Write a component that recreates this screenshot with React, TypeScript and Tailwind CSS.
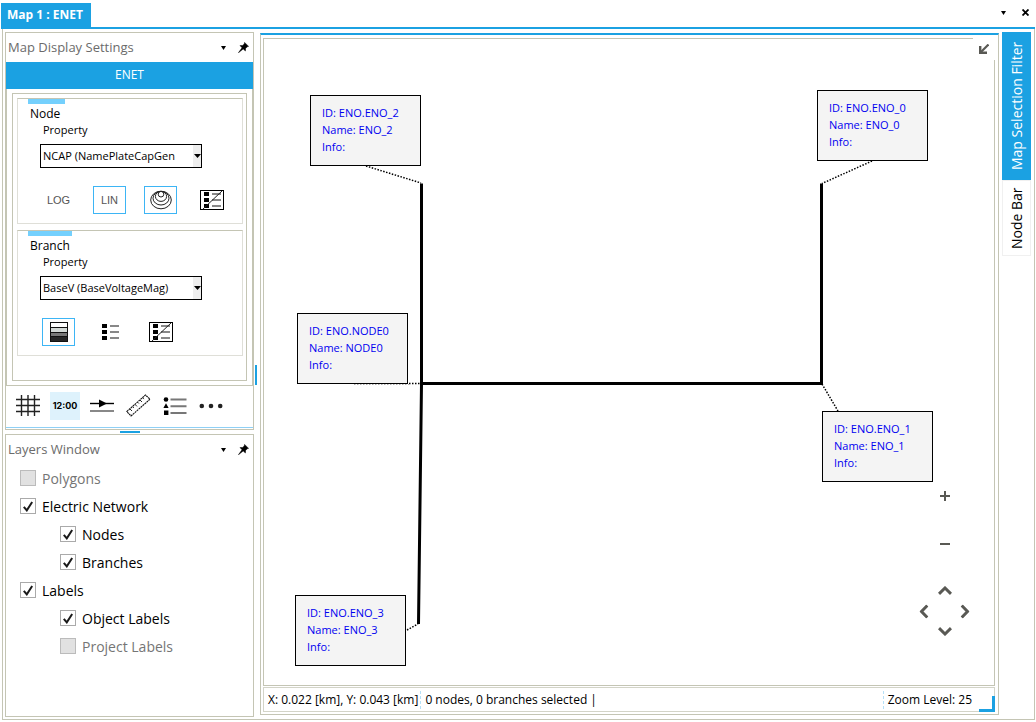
import React from "react";
import { clsx } from "clsx";

const nodeLabels = [
  { id: "ENO.ENO_2", name: "ENO_2", place: "left-[46px] top-[56px]" },
  { id: "ENO.ENO_0", name: "ENO_0", place: "left-[553px] top-[51px]" },
  { id: "ENO.NODE0", name: "NODE0", place: "left-[33px] top-[274px]" },
  { id: "ENO.ENO_1", name: "ENO_1", place: "left-[558px] top-[372px]" },
  { id: "ENO.ENO_3", name: "ENO_3", place: "left-[31px] top-[556px]" },
];

const layers = [
  { label: "Polygons", checked: false, disabled: true, child: false },
  { label: "Electric Network", checked: true, disabled: false, child: false },
  { label: "Nodes", checked: true, disabled: false, child: true },
  { label: "Branches", checked: true, disabled: false, child: true },
  { label: "Labels", checked: true, disabled: false, child: false },
  { label: "Object Labels", checked: true, disabled: false, child: true },
  { label: "Project Labels", checked: false, disabled: true, child: true },
];

/* ---------- icons ---------- */

function CaretIcon() {
  return (
    <svg width="5" height="4" viewBox="0 0 5 4">
      <path d="M0 0h5L2.5 4z" fill="#000" />
    </svg>
  );
}

function PinIcon() {
  return (
    <svg width="11" height="11" viewBox="0 0 11 11">
      <path d="M6.6 0.4L10.6 4.4L9.2 4.8L7.6 6.4L7.4 9L5.2 7L0.4 10.8L4 5.8L2 3.6L4.8 3.4L6.3 1.8z" fill="#000" stroke="#000" strokeWidth="0.5" />
    </svg>
  );
}

function BubblesIcon() {
  return (
    <svg width="22" height="20" viewBox="0 0 22 20" fill="none" stroke="#222" strokeWidth="1">
      <ellipse cx="11" cy="10" rx="10.3" ry="8.8" />
      <ellipse cx="11" cy="8.2" rx="8" ry="6.8" />
      <ellipse cx="11" cy="6.4" rx="5.6" ry="5" />
      <circle cx="11" cy="4.2" r="2.8" />
    </svg>
  );
}

function ListIcon({ boxed = false }: { boxed?: boolean }) {
  return (
    <svg width="24" height="20" viewBox="0 0 24 20">
      {boxed && <rect x="0.5" y="0.5" width="23" height="19" fill="#fff" stroke="#000" />}
      <path d="M4 2h5v4H4zM4 8h5v4H4zM4 14h5v4H4z" fill="#000" />
      <path d="M12 4h9M12 10h9M12 16h9" stroke="#888" strokeWidth="2" />
      {boxed && <path d="M3 19L22 1" stroke="#222" strokeWidth="1" />}
    </svg>
  );
}

function ShadesIcon() {
  return (
    <svg width="18" height="20" viewBox="0 0 18 20">
      <path d="M0 0h18v20H0z" fill="#111" />
      <path d="M1 1h16v4H1z" fill="#fff" />
      <path d="M1 6h16v4H1z" fill="#d3d9d6" />
      <path d="M1 11h16v3H1z" fill="#777" />
      <path d="M1 15h16v4H1z" fill="#262626" />
    </svg>
  );
}

function GridIcon() {
  return (
    <svg width="24" height="21" viewBox="0 0 24 21" stroke="#222" strokeWidth="1.4">
      <path d="M0 4.5h24M0 10.5h24M0 16.5h24M5.5 0v21M12 0v21M18.5 0v21" />
    </svg>
  );
}

function FlowIcon() {
  return (
    <svg width="24" height="14" viewBox="0 0 24 14">
      <path d="M0 4.5h24" stroke="#000" strokeWidth="1.4" />
      <path d="M9 0.5L17 4.5L9 8.5z" fill="#000" />
      <path d="M0 12h24" stroke="#888" strokeWidth="2" />
    </svg>
  );
}

function RulerIcon() {
  return (
    <svg width="25" height="23" viewBox="0 0 25 23" fill="none" stroke="#111">
      <path d="M0.8 17.5L19.5 1L24 5.2L5 22z" strokeWidth="1.1" strokeDasharray="2 0.6" />
      <path d="M4 15l2 2M6.6 12.6l1.3 1.3M9 10.4l2 2M11.6 8.2l1.3 1.3M14 6l2 2M16.6 3.8l1.3 1.3" strokeWidth="0.9" />
    </svg>
  );
}

function LegendIcon() {
  return (
    <svg width="24" height="18" viewBox="0 0 24 18">
      <circle cx="3" cy="2.5" r="2.3" fill="#000" />
      <path d="M3 6.2L5.6 11H0.4zM1 13.5h4.4v4.4H1z" fill="#000" />
      <path d="M7.5 2.5H23.5M7.5 9.2H23.5M7.5 16H23.5" stroke="#777" strokeWidth="2" />
    </svg>
  );
}

function DotsIcon() {
  return (
    <svg width="24" height="6" viewBox="0 0 24 6" fill="#222">
      <circle cx="2.8" cy="3" r="2.3" />
      <circle cx="12" cy="3" r="2.3" />
      <circle cx="21.2" cy="3" r="2.3" />
    </svg>
  );
}

function ChevronIcon({ className }: { className?: string }) {
  return (
    <svg width="14" height="9" viewBox="0 0 14 9" className={className}>
      <path d="M1 7.8L7 2L13 7.8" fill="none" stroke="#595954" strokeWidth="3" />
    </svg>
  );
}

/* ---------- panels ---------- */

function PanelHeader({ title }: { title: string }) {
  return (
    <div className="flex h-[29px] items-center pr-1 pl-0.5">
      <h2 className="flex-1 text-[13px] text-[#6b6b6b]">{title}</h2>
      <button aria-label={`${title} menu`} className="mr-3"><CaretIcon /></button>
      <button aria-label={`Pin ${title}`}><PinIcon /></button>
    </div>
  );
}

function IconButton({ label, active, children }: { label: string; active?: boolean; children: React.ReactNode }) {
  return (
    <button
      aria-label={label}
      className={clsx(
        "flex h-7 w-[33px] items-center justify-center border font-['Liberation_Sans'] text-[11px] text-[#555]",
        active ? "border-[#3db5f5]" : "border-transparent"
      )}
    >
      {children}
    </button>
  );
}

function PropertyGroup({ title, id, value, accent, children }: {
  title: string; id: string; value: string; accent: string; children: React.ReactNode;
}) {
  return (
    <section className="h-[126px] border border-[#dfdfd8] border-t-[#c4c5b4] pl-2.5">
      <div className={clsx("h-[5px] bg-[#74d0fd]", accent)} />
      <h3 className="pl-0.5 text-[12px] leading-5">{title}</h3>
      <label htmlFor={id} className="block pl-[15px] text-[11px] leading-3">Property</label>
      <div className="mt-2 ml-3 grid w-[162px] items-center">
        <select id={id} defaultValue={value} className="col-start-1 row-start-1 h-6 w-full appearance-none border border-black bg-white pl-0.5 text-[11px]">
          <option>{value}</option>
        </select>
        <span className="pointer-events-none col-start-1 row-start-1 mr-px flex h-[22px] w-2 items-center justify-center justify-self-end bg-[#eee]">
          <svg width="7" height="4" viewBox="0 0 7 4"><path d="M0 0h7L3.5 4z" /></svg>
        </span>
      </div>
      <div className="mt-[18px] ml-3.5 flex gap-[18px]">{children}</div>
    </section>
  );
}

function DisplaySettings() {
  return (
    <section className="border border-[#c4c5b4]">
      <PanelHeader title="Map Display Settings" />
      <button className="block h-[27px] w-full bg-[#1ba1e2] pb-0.5 text-[12px] text-white">ENET</button>
      <div className="border-x border-b border-[#c4c5b4] px-[5px] pt-1 pb-1">
        <div className="space-y-1.5 border border-[#c4c5b4] pt-1 pr-[3px] pb-6 pl-1">
          <PropertyGroup title="Node" id="node-property" value="NCAP (NamePlateCapGen" accent="w-[37px]">
            <IconButton label="Logarithmic">LOG</IconButton>
            <IconButton label="Linear" active>LIN</IconButton>
            <IconButton label="Bubbles" active><BubblesIcon /></IconButton>
            <IconButton label="Hide node legend"><ListIcon boxed /></IconButton>
          </PropertyGroup>
          <PropertyGroup title="Branch" id="branch-property" value="BaseV (BaseVoltageMag)" accent="w-[44px]">
            <IconButton label="Shades" active><ShadesIcon /></IconButton>
            <IconButton label="Branch legend"><ListIcon /></IconButton>
            <IconButton label="Hide branch legend"><ListIcon boxed /></IconButton>
          </PropertyGroup>
        </div>
      </div>
      <div className="flex h-[41px] items-center gap-3 pb-0.5 pl-2.5">
        <button aria-label="Grid"><GridIcon /></button>
        <button className="-mx-0.5 h-7 w-[30px] bg-[#def2fc] font-['Inter'] text-[9px] font-bold">12:00</button>
        <button aria-label="Flow arrows"><FlowIcon /></button>
        <button aria-label="Ruler"><RulerIcon /></button>
        <button aria-label="Legend"><LegendIcon /></button>
        <button aria-label="More"><DotsIcon /></button>
      </div>
      <div className="mb-px h-px bg-[#8fd0f5]" />
    </section>
  );
}

function LayerRow({ layer }: { layer: (typeof layers)[number] }) {
  return (
    <li className={layer.child ? "pl-[54px]" : "pl-3.5"}>
      <label className={clsx("flex h-7 items-center gap-1.5 text-[14px]", layer.disabled && "text-[#757575]")}>
        <span className="grid place-items-center">
          <input
            type="checkbox"
            defaultChecked={layer.checked}
            disabled={layer.disabled}
            className="peer col-start-1 row-start-1 size-4 appearance-none border border-[#aaa] bg-white disabled:border-[#bbb] disabled:bg-[#e1e1e1]"
          />
          <svg width="10" height="11" viewBox="0 0 10 11" className="pointer-events-none invisible col-start-1 row-start-1 peer-checked:visible">
            <path d="M0.8 5.8L3.8 9.4L9.2 1" fill="none" stroke="#1a1a1a" strokeWidth="2" />
          </svg>
        </span>
        {layer.label}
      </label>
    </li>
  );
}

function LayersWindow() {
  return (
    <section className="flex-1 border border-[#c4c5b4]">
      <PanelHeader title="Layers Window" />
      <ul>
        {layers.map((layer) => (
          <LayerRow key={layer.label} layer={layer} />
        ))}
      </ul>
    </section>
  );
}

/* ---------- map ---------- */

function NetworkMap() {
  return (
    <div className="relative min-h-[648px] flex-1 border border-[#c4c5b4]">
      <svg className="absolute inset-0 size-full" fill="none" stroke="#000">
        <g strokeWidth="3">
          <path d="M157.5 144.5V344.5L154.5 585" />
          <path d="M157.5 344.5H557.5V144.5" />
        </g>
        <g strokeWidth="1.5" strokeDasharray="1.5 1.5">
          <path d="M102 127L157 144M608 122L558 144.5M145 344.5H157M558 345L574 372M143 591L154 585" />
          <path d="M90 345.5H145" stroke="#aaa" strokeWidth="1" />
        </g>
      </svg>

      {nodeLabels.map((n) => (
        <div key={n.id} className={clsx("absolute w-[111px] border border-black bg-[#f4f4f4] pt-2 pb-2.5 pl-[11px] text-[11px] leading-[17px] whitespace-nowrap text-[#0000f0]", n.place)}>
          <p>ID: {n.id}</p>
          <p>Name: {n.name}</p>
          <p>Info:</p>
        </div>
      ))}

      <button aria-label="Collapse" className="absolute -top-px -right-px flex size-[22px] items-center justify-center bg-white">
        <svg width="10" height="10" viewBox="0 0 10 10" fill="none" stroke="#595954">
          <path d="M9.5 0.5L2 8" strokeWidth="2.2" />
          <path d="M1.2 2V8.8H8" strokeWidth="2.4" />
        </svg>
      </button>

      {/* Zoom and pan controls */}
      <div className="absolute right-6 bottom-[49px] flex w-[51px] flex-col items-center">
        <button aria-label="Zoom in" className="flex size-6 items-center justify-center">
          <svg width="10" height="10" viewBox="0 0 10 10"><path d="M4 0h2v4h4v2H6v4H4V6H0V4h4z" fill="#595954" /></svg>
        </button>
        <button aria-label="Zoom out" className="mt-6 flex size-6 items-center justify-center">
          <svg width="10" height="2" viewBox="0 0 10 2"><path d="M0 0h10v2H0z" fill="#595954" /></svg>
        </button>
        <div className="mt-[30px] flex w-full flex-col items-center">
          <button aria-label="Pan up"><ChevronIcon className="block" /></button>
          <div className="my-1 flex w-full justify-between">
            <button aria-label="Pan left" className="-ml-0.5 flex h-6 items-center"><ChevronIcon className="-rotate-90" /></button>
            <button aria-label="Pan right" className="-mr-0.5 flex h-6 items-center"><ChevronIcon className="rotate-90" /></button>
          </div>
          <button aria-label="Pan down"><ChevronIcon className="block rotate-180" /></button>
        </div>
      </div>
    </div>
  );
}

function StatusBar() {
  return (
    <footer className="relative mt-px flex h-[25px] items-center border border-[#d3d4c8] text-[12px] whitespace-nowrap">
      <span className="pr-0.5 pl-1">X: 0.022 [km], Y: 0.043 [km]</span>
      <span className="flex-1 border-l border-dashed border-[#b5e0f7] pl-1">0 nodes, 0 branches selected |</span>
      <span className="border-l border-dashed border-[#b5e0f7] pr-[22px] pl-1">Zoom Level: 25</span>
      <span className="absolute -right-px -bottom-px size-4 border-r-3 border-b-3 border-[#1ba1e2]" />
    </footer>
  );
}

export default function App() {
  return (
    <div className="flex min-h-screen flex-col bg-white pr-px pb-0.5 font-['Open_Sans','Noto_Sans',sans-serif] text-black">
      {/* Document tabs */}
      <header className="ml-px flex h-[29px] items-end border-b-2 border-[#1ba1e2]">
        <button className="h-6 w-[90px] bg-[#1ba1e2] pl-1.5 text-left text-[12px] font-bold whitespace-nowrap text-white">Map 1 : ENET</button>
        <div className="flex flex-1 items-center justify-end gap-4 self-center pr-1.5 pb-0.5">
          <button aria-label="Window list"><CaretIcon /></button>
          <button aria-label="Close">
            <svg width="7" height="7" viewBox="0 0 7 7"><path d="M0.5 0.5L6.5 6.5M6.5 0.5L0.5 6.5" stroke="#000" strokeWidth="1.8" /></svg>
          </button>
        </div>
      </header>

      <div className="ml-0.5 flex flex-1 border-x border-b border-[#c4c5b4] pt-[3px] pb-0.5 pl-0.5">
        <aside className="flex w-[249px] shrink-0 flex-col">
          <DisplaySettings />
          <div className="flex h-1 items-center justify-center">
            <div className="h-0.5 w-5 bg-[#1ba1e2]" />
          </div>
          <LayersWindow />
        </aside>
        <div className="flex w-1.5 shrink-0 items-center pl-px">
          <div className="h-5 w-0.5 bg-[#1ba1e2]" />
        </div>
        <main className="mt-px mb-0.5 flex min-w-0 flex-1 flex-col border-x border-t-2 border-b border-[#c4c5b4] border-t-[#1ba1e2] pt-[3px] pr-[3px] pb-0.5 pl-0.5">
          <NetworkMap />
          <StatusBar />
        </main>
        <nav className="mr-[3px] ml-[3px] flex w-[29px] shrink-0 flex-col text-[14px] leading-7">
          <button className="h-[148px] rotate-180 bg-[#1ba1e2] whitespace-nowrap text-white [writing-mode:vertical-rl]">Map Selection Filter</button>
          <button className="h-[76px] rotate-180 border border-[#f0f0f0] whitespace-nowrap [writing-mode:vertical-rl]">Node Bar</button>
        </nav>
      </div>
    </div>
  );
}
